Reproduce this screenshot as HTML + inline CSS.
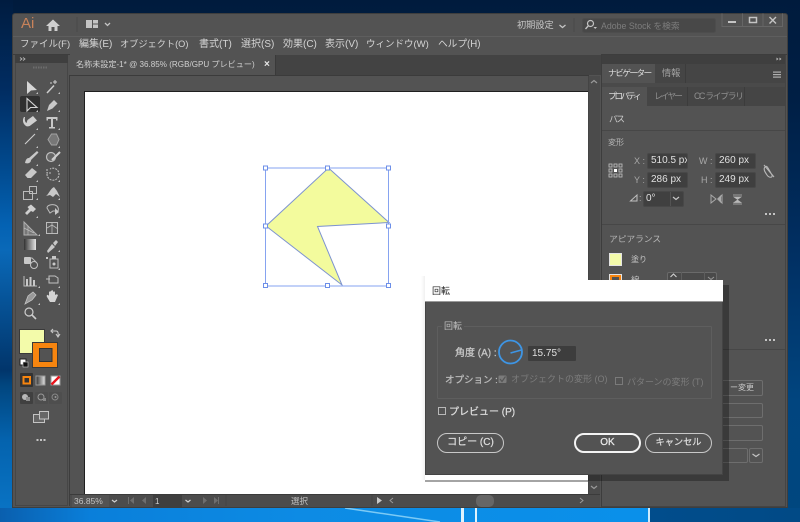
<!DOCTYPE html>
<html lang="ja"><head><meta charset="utf-8">
<style>
*{box-sizing:border-box}
html,body{margin:0;padding:0}
body{width:800px;height:522px;overflow:hidden;position:relative;font-family:"Liberation Sans","Noto Sans CJK JP",sans-serif;background:#012a5c;filter:blur(.3px)}
.a{position:absolute}
.t{position:absolute;white-space:nowrap;font-size:10px;line-height:12px;color:#c8c8c8}
.m{top:38px;line-height:13px;color:#d4d4d4}
.b{-webkit-text-stroke:.25px currentColor}
svg{position:absolute;left:0;top:0}
.inp{position:absolute;background:#3f3f3f;border:1px solid #484848;color:#e0e0e0;font-size:10px;line-height:14px;padding-left:3px;white-space:nowrap;overflow:hidden;height:16px;border-radius:2px}
.btn{position:absolute;border:1.500px solid #c8c8c8;border-radius:10px;height:20px;color:#dcdcdc;font-size:10px;line-height:17px;text-align:center;-webkit-text-stroke:.25px currentColor}
.ol{position:absolute;border:1px solid #6e6e6e;border-radius:2px}
</style></head><body>
<!-- desktop -->
<div class="a" style="left:0;top:0;width:800px;height:522px;background:linear-gradient(180deg,#001b3d 0,#001f45 70px,#01356f 180px,#01508f 300px,#014a8a 400px,#01508f 522px)"></div>
<div class="a" style="left:0;top:0;width:13px;height:522px;background:linear-gradient(180deg,#001c40 0,#012d62 90px,#014b90 170px,#0462b3 225px,#0a69b8 250px,#01356b 370px,#01467f 385px,#0463ae 440px,#0a76c8 522px)"></div>
<div class="a" style="left:787px;top:0;width:13px;height:522px;background:linear-gradient(180deg,#001b3d 0,#001f45 100px,#012f62 250px,#01457f 400px,#00477f 522px)"></div>
<div class="a" style="left:0;top:508px;width:800px;height:14px;background:linear-gradient(90deg,#0a5fae 0,#0a7fda 90px,#0d8be4 300px,#0a90ea 648px,#014d8c 650px,#014a86 800px)"></div>
<svg width="800" height="522"><path d="M345 508L440 522" stroke="#7ccaf5" stroke-width="1.500" fill="none"/><rect x="461" y="508" width="3" height="14" fill="#dff3fd"/><rect x="475" y="508" width="2" height="14" fill="#dff3fd"/><rect x="648" y="508" width="2" height="14" fill="#cdeafc"/></svg>
<!-- window -->
<div class="a" style="left:12px;top:13px;width:776px;height:495px;background:#535353;border:1px solid #3e3e3e;border-radius:3px 3px 0 0"></div>
<!-- title bar -->
<div class="t" style="left:21px;top:15px;font-size:15px;line-height:17px;color:#c9835a">Ai</div>
<svg width="800" height="60">
<path d="M46 26L53 19.500L60 26H57.500V31H54.500V27H51.500V31H48.500V26Z" fill="#cfcfcf"/>
<line x1="77" y1="17" x2="77" y2="32" stroke="#484848"/>
<rect x="86" y="20" width="6" height="8" fill="#c4c4c4"/><rect x="93" y="20" width="5" height="3.500" fill="#c4c4c4"/><rect x="93" y="24.500" width="5" height="3.500" fill="#c4c4c4"/>
<path d="M105 23L107.500 25.500L110 23" stroke="#c4c4c4" stroke-width="1.300" fill="none"/>
<path d="M559.500 25L562.500 27.500L565.500 25" stroke="#c4c4c4" stroke-width="1.300" fill="none"/>
<line x1="574" y1="18" x2="574" y2="32" stroke="#484848"/>
<rect x="582.500" y="18.500" width="133" height="14" rx="2" fill="#484848" stroke="#4d4d4d"/>
<circle cx="590.500" cy="23.500" r="3" fill="none" stroke="#c4c4c4" stroke-width="1.200"/><path d="M588.300 25.800L585.500 29" stroke="#c4c4c4" stroke-width="1.400"/><path d="M593.500 27L597 27L595.200 29Z" fill="#c4c4c4"/>
<path d="M722 13.500V26.500H782.500V13.500M742.500 13.500V26.500M763 13.500V26.500" fill="none" stroke="#666"/>
<rect x="728" y="21" width="8" height="2" fill="#c4c4c4"/>
<rect x="749.500" y="17.500" width="7" height="5" fill="none" stroke="#c4c4c4" stroke-width="1.500"/>
<path d="M769.500 17L776 23.500M776 17L769.500 23.500" stroke="#c4c4c4" stroke-width="1.400"/>
</svg>
<div class="t" style="left:517px;top:19px;font-size:9.200px;color:#c8c8c8">初期設定</div>
<div class="t" style="left:601px;top:20px;font-size:8.800px;color:#7d7d7d">Adobe Stock を検索</div>
<!-- menu -->
<div class="a" style="left:13px;top:36px;width:774px;height:1px;background:#5e5e5e"></div>
<div class="t m" style="left:20px;font-size:9.500px">ファイル(F)</div>
<div class="t m" style="left:79px;font-size:10px">編集(E)</div>
<div class="t m" style="left:120px;font-size:9.200px">オブジェクト(O)</div>
<div class="t m" style="left:199px;font-size:10px">書式(T)</div>
<div class="t m" style="left:241px;font-size:10px">選択(S)</div>
<div class="t m" style="left:283px;font-size:10px">効果(C)</div>
<div class="t m" style="left:325px;font-size:10px">表示(V)</div>
<div class="t m" style="left:366px;font-size:9.500px">ウィンドウ(W)</div>
<div class="t m" style="left:438px;font-size:9.700px">ヘルプ(H)</div>
<div class="a" style="left:13px;top:54px;width:774px;height:1px;background:#3d3d3d"></div>
<!-- left toolbar -->
<div class="a" style="left:15px;top:55px;width:53px;height:451px;background:#535353;border:1px solid #464646"></div>
<div class="a" style="left:15px;top:55px;width:53px;height:8px;background:#3f3f3f"></div>
<svg width="80" height="80"><path d="M20 57.500L22 59L20 60.500M23 57.500L25 59L23 60.500" fill="none" stroke="#bbb" stroke-width=".800"/><line x1="33" y1="67.500" x2="48" y2="67.500" stroke="#6c6c6c" stroke-width="2" stroke-dasharray="1.500 1"/></svg>
<!-- canvas area -->
<div class="a" style="left:69px;top:54px;width:532px;height:452px;background:#535353;border-left:1px solid #3d3d3d"></div>
<div class="a" style="left:69px;top:55px;width:532px;height:20px;background:#434343"></div>
<div class="a" style="left:69px;top:55px;width:207px;height:20px;background:#535353;border-right:1px solid #3a3a3a"></div>
<div class="t" style="left:76px;top:59px;font-size:8.100px;color:#d0d0d0">名称未設定-1* @ 36.85% (RGB/GPU プレビュー)</div>
<div class="t" style="left:264px;top:59px;font-size:10px;font-weight:bold;color:#e8e8e8">×</div>
<div class="a" style="left:69px;top:75px;width:520px;height:1px;background:#3b3b3b"></div>
<div class="a" style="left:84px;top:91px;width:504px;height:403px;background:#fff;border:1px solid #1f1f1f;border-right:none;border-bottom:none"></div>
<!-- vertical scrollbar -->
<div class="a" style="left:588px;top:76px;width:12px;height:430px;background:#4b4b4b;border-left:1px solid #444"></div>
<svg width="800" height="522"><path d="M591 83L594 80.500L597 83" fill="none" stroke="#9a9a9a" stroke-width="1.200"/><path d="M591 486L594 488.500L597 486" fill="none" stroke="#9a9a9a" stroke-width="1.200"/></svg>
<!-- status bar -->
<div class="a" style="left:70px;top:494px;width:530px;height:13px;background:#4c4c4c;border-top:1px solid #3b3b3b"></div>
<div class="a" style="left:72px;top:495px;width:37px;height:12px;background:#535353"></div>
<div class="t" style="left:74px;top:496px;font-size:8.500px;line-height:11px;color:#c4c4c4">36.85%</div>
<div class="a" style="left:153px;top:495px;width:29px;height:12px;background:#3f3f3f"></div>
<div class="t" style="left:155px;top:497px;font-size:8px;line-height:10px;color:#d0d0d0">1</div>
<div class="t" style="left:291px;top:496px;font-size:8.500px;line-height:11px;color:#c0c0c0">選択</div>
<div class="a" style="left:476px;top:495px;width:18px;height:12px;background:#666;border-radius:5px"></div>
<svg width="800" height="522">
<g fill="none" stroke="#d0d0d0" stroke-width="1.200"><path d="M112 500L114.500 502L117 500"/><path d="M185.500 500L188 502L190.500 500"/></g>
<g fill="#6e6e6e"><rect x="128" y="497" width="1" height="7"/><path d="M134 497V504L130 500.500Z"/><path d="M146 497V504L142 500.500Z"/><path d="M203 497V504L207 500.500Z"/><path d="M214 497V504L218 500.500Z"/><rect x="218" y="497" width="1" height="7"/></g>
<path d="M377 497V504L382 500.500Z" fill="#c8c8c8"/><path d="M393 498L390 500.500L393 503" fill="none" stroke="#999" stroke-width="1"/><path d="M580 498L583 500.500L580 503" fill="none" stroke="#999" stroke-width="1"/>
<line x1="226" y1="495" x2="226" y2="506" stroke="#444"/><line x1="372" y1="495" x2="372" y2="506" stroke="#444"/>
</svg>
<!-- artwork -->
<svg width="800" height="522">
<path d="M328.500 168L389 222.500L317.500 226.500L342 285L266 226Z" fill="#f3fb9d" stroke="#7d93d0" stroke-width="1"/>
<rect x="265.500" y="168" width="123" height="118" fill="none" stroke="#86a3f0" stroke-width="1"/>
<g fill="#fff" stroke="#6d8fe8" stroke-width="1"><rect x="263.500" y="166" width="4" height="4"/><rect x="325.500" y="166" width="4" height="4"/><rect x="386.500" y="166" width="4" height="4"/><rect x="263.500" y="224" width="4" height="4"/><rect x="386.500" y="224" width="4" height="4"/><rect x="263.500" y="283.500" width="4" height="4"/><rect x="325.500" y="283.500" width="4" height="4"/><rect x="386.500" y="283.500" width="4" height="4"/></g>
</svg>
<!-- tools -->
<div class="a" style="left:20px;top:96px;width:20px;height:16px;background:#303030;border-radius:2px"></div>
<svg width="80" height="522">
<g fill="#c8c8c8">
<path d="M27 81V94L31 90.500L37 90Z" fill="#d6d6d6"/>
<path d="M47 93L54 85.500" stroke="#cfcfcf" stroke-width="1.500"/><path d="M55 80V84M53 82H57M50 83H52" stroke="#cfcfcf" stroke-width="1"/>
<path d="M27 98.500V111L30.500 107.500L37 107.500Z" fill="none" stroke="#d4d4d4" stroke-width="1.100"/>
<path d="M47 111L49 105L54 100L57.500 103.500L52.500 108.500Z"/>
<path d="M24 117C22 120 23 124 26 126C28 127 30 126 31 125L37 120.500L33 116L27.500 120L26.500 123C25 122 24.500 120 25 117Z" fill="#cfcfcf"/>
<path d="M46.500 117H57.500V120.500H56V119H53V127H55V128.500H49V127H51V119H48V120.500H46.500Z"/>
<path d="M25 144L35 134" stroke="#cfcfcf" stroke-width="1.100"/>
<path d="M48 139.500L51.500 134H56.500L59 139.500L56.500 145H51.500Z" fill="#777" stroke="#a2a2a2"/>
<path d="M25 163C26 158 28 158 29 158L37 151L38.500 152.500L31 160C31 163 28 164 25 163Z"/>
<circle cx="51" cy="157" r="4.500" fill="#666" stroke="#bdbdbd" stroke-width="1.200"/><path d="M52 160L60 152" stroke="#d0d0d0" stroke-width="2"/>
<path d="M25 175L32 168L37 172L31 178H27.500Z"/>
<path d="M47 174A6 6 0 1 0 50 169M47 169V173H51" fill="none" stroke="#bcbcbc" stroke-width="1.100" stroke-dasharray="2 1"/>
<rect x="23.500" y="191.500" width="9" height="8" fill="none" stroke="#bbb"/><rect x="29.500" y="186.500" width="7" height="7" fill="none" stroke="#bbb"/>
<path d="M46 196C49 194 50 189 54 187L57 191L60 197L56 194L53 197L50 195Z"/>
<path d="M25 213L29 209L27.500 207L31 204.500L36 209L33 212L31 211L27 215Z" fill="#cfcfcf"/>
<path d="M47 208C47 205 52 204 55 205C58 206 59 209 58 211H53L50 213Z" fill="none" stroke="#bcbcbc"/><path d="M55 208V215L59 212Z"/>
<path d="M24 222V235H37L24 222Z" fill="#777" stroke="#b0b0b0"/><path d="M24 228L34 233M28 226V235" stroke="#bbb" stroke-width=".700"/>
<rect x="46.500" y="222.500" width="11" height="11" fill="#5a5a5a" stroke="#bbb"/><path d="M47 228L52 225L58 229M52 223V233" stroke="#bbb" stroke-width=".800" fill="none"/>
<path d="M47 251L52 244L55 247L48 253Z"/><path d="M53 243L56 240L58 242L55 246Z"/>
<path d="M27 258L32 258L36 262" stroke="#bbb" fill="none"/><rect x="24" y="257" width="7" height="7" rx="1"/><circle cx="34" cy="265" r="3.500" fill="none" stroke="#c4c4c4"/>
<rect x="50" y="259" width="8" height="9" fill="none" stroke="#bbb"/><rect x="52" y="256" width="4" height="3"/><circle cx="54" cy="264" r="1.500"/><rect x="46" y="257" width="2" height="2"/>
<path d="M24 276V286H37" fill="none" stroke="#bbb"/><rect x="26" y="279" width="2" height="7"/><rect x="29.500" y="277" width="2" height="9"/><rect x="33" y="280" width="2" height="6"/>
<path d="M49 276V283H58V278L55 276H49Z M46 279H50" fill="none" stroke="#c0c0c0"/>
<path d="M25 304L28 296L33 292L36 295L32 300Z" fill="#999" stroke="#c4c4c4" stroke-width=".800"/>
<path d="M47 297C46 295 48 294 49 296V292C50 291 51 291 51 292V291C52 290 53 290 53 291V292C54 291 55 291 55 293V295C56 294 57 294 58 295L55 302H50Z" fill="#d4d4d4"/>
<circle cx="29" cy="312" r="4" fill="none" stroke="#cdcdcd" stroke-width="1.200"/><path d="M32 315L36 319" stroke="#cdcdcd" stroke-width="1.600"/>
</g>
<g fill="#c4c4c4"><path d="M38 94V92L36 94Z"/><path d="M60 94V92L58 94Z"/><path d="M38 112V110L36 112Z"/><path d="M60 112V110L58 112Z"/><path d="M38 130V128L36 130Z"/><path d="M60 130V128L58 130Z"/><path d="M38 148V146L36 148Z"/><path d="M60 148V146L58 148Z"/><path d="M38 166V164L36 166Z"/><path d="M60 166V164L58 166Z"/><path d="M38 182V180L36 182Z"/><path d="M60 182V180L58 182Z"/><path d="M38 200V198L36 200Z"/><path d="M60 200V198L58 200Z"/><path d="M38 218V216L36 218Z"/><path d="M60 218V216L58 218Z"/><path d="M40 236V234L38 236Z"/><path d="M60 252V250L58 252Z"/><path d="M60 270V268L58 270Z"/><path d="M40 288V286L38 288Z"/><path d="M60 288V286L58 288Z"/><path d="M40 305V303L38 305Z"/><path d="M60 305V303L58 305Z"/></g>
<defs><linearGradient id="g1"><stop offset="0" stop-color="#333"/><stop offset="1" stop-color="#e6e6e6"/></linearGradient></defs>
<rect x="24" y="239" width="12" height="11" fill="url(#g1)"/>
<!-- fill/stroke -->
<rect x="19.500" y="329.500" width="25" height="24" fill="#f3fbaa" stroke="#3a3a3a"/>
<rect x="32.500" y="342.500" width="25" height="25" fill="#f7850f" stroke="#3a3a3a"/>
<rect x="39.500" y="348.500" width="12.500" height="13" fill="#535353" stroke="#333"/>
<path d="M52 331H56C58 331 58.500 333 58 336M53 329L51 331L53 333M56 334L58 337L60 334" fill="none" stroke="#c8c8c8" stroke-width="1.100"/>
<rect x="20" y="359" width="6" height="6" fill="#fff" stroke="#222"/><rect x="23" y="362" width="5" height="5" fill="#111" stroke="#ccc" stroke-width=".600"/>
<!-- modes -->
<rect x="20" y="373" width="13" height="14" rx="1" fill="#333"/>
<rect x="23.500" y="377" width="6.500" height="6.500" fill="none" stroke="#f7850f" stroke-width="2"/>
<rect x="36" y="376" width="9" height="9" fill="url(#g1)" stroke="#999"/>
<rect x="51" y="376" width="9" height="9" fill="#fff" stroke="#999"/><path d="M51.500 384.500L59.500 376.500" stroke="#e8141c" stroke-width="2.400"/>
<rect x="20" y="392" width="13" height="12" rx="1" fill="#404040"/><rect x="35" y="392" width="13" height="12" rx="1" fill="#4e4e4e"/><rect x="49" y="392" width="13" height="12" rx="1" fill="#4e4e4e"/>
<circle cx="25" cy="397" r="3" fill="#b8b8b8"/><rect x="26" y="397" width="4" height="4" fill="#8e8e8e"/>
<circle cx="41" cy="397" r="3" fill="none" stroke="#9a9a9a"/><rect x="43" y="398" width="3" height="3" fill="#888"/>
<circle cx="55" cy="397" r="3" fill="none" stroke="#888"/><circle cx="55.500" cy="397" r="1" fill="#999"/>
<rect x="33.500" y="414.500" width="11" height="8" fill="#666" stroke="#c4c4c4"/><rect x="39.500" y="411.500" width="9" height="7.500" fill="#666" stroke="#c4c4c4"/>
<g fill="#c4c4c4"><rect x="36.500" y="439" width="2" height="2"/><rect x="40" y="439" width="2" height="2"/><rect x="43.500" y="439" width="2" height="2"/></g>
</svg>
<!-- right panel -->
<div class="a" style="left:601px;top:55px;width:185px;height:452px;background:#535353;border-left:1px solid #3d3d3d;border-right:1px solid #444;border-bottom:1px solid #444"></div>
<div class="a" style="left:602px;top:55px;width:183px;height:9px;background:#3f3f3f"></div>
<div class="a" style="left:602px;top:64px;width:183px;height:19px;background:#454545"></div>
<div class="a" style="left:602px;top:64px;width:53px;height:19px;background:#535353"></div>
<div class="a" style="left:685px;top:64px;width:1px;height:19px;background:#3c3c3c"></div>
<div class="t" style="left:608px;top:67px;font-size:8.800px;letter-spacing:-1.700px;color:#dadada">ナビゲーター</div>
<div class="t" style="left:662px;top:67px;font-size:9.200px;color:#a4a4a4">情報</div>
<div class="a" style="left:602px;top:83px;width:183px;height:4px;background:#4a4a4a"></div>
<div class="a" style="left:602px;top:87px;width:183px;height:19px;background:#454545"></div>
<div class="a" style="left:602px;top:87px;width:45px;height:19px;background:#535353"></div>
<div class="a" style="left:687px;top:87px;width:1px;height:19px;background:#3c3c3c"></div>
<div class="a" style="left:744px;top:87px;width:1px;height:19px;background:#3c3c3c"></div>
<div class="t" style="left:608px;top:90px;font-size:8.800px;letter-spacing:-2.400px;color:#dadada">プロパティ</div>
<div class="t" style="left:654px;top:90px;font-size:8.800px;letter-spacing:-2px;color:#8f8f8f">レイヤー</div>
<div class="t" style="left:694px;top:90px;font-size:8.800px;letter-spacing:-1.300px;color:#8f8f8f">CC ライブラリ</div>
<div class="t" style="left:609px;top:113px;font-size:8.800px;letter-spacing:-1.500px;color:#c8c8c8">パス</div>
<div class="a" style="left:602px;top:130px;width:183px;height:1px;background:#474747"></div>
<div class="t" style="left:608px;top:137px;font-size:8px;color:#b4b4b4">変形</div>
<div class="t" style="left:634px;top:155px;font-size:9px;color:#a8a8a8">X :</div>
<div class="t" style="left:634px;top:174px;font-size:9px;color:#a8a8a8">Y :</div>
<div class="t" style="left:699px;top:155px;font-size:9px;color:#a8a8a8">W :</div>
<div class="t" style="left:701px;top:174px;font-size:9px;color:#a8a8a8">H :</div>
<div class="inp" style="left:647px;top:153px;width:41px;">510.5 px</div>
<div class="inp" style="left:647px;top:172px;width:41px">286 px</div>
<div class="inp" style="left:715px;top:153px;width:41px">260 px</div>
<div class="inp" style="left:715px;top:172px;width:41px">249 px</div>
<div class="t" style="left:639px;top:192px;font-size:9px;color:#a8a8a8">:</div>
<div class="inp" style="left:643px;top:191px;width:41px;background:#404040;padding-left:2px">0°</div>
<div class="a" style="left:670px;top:192px;width:1px;height:14px;background:#535353"></div>
<svg width="800" height="522">
<path d="M776.500 57.500L778.500 59L776.500 60.500V57.500ZM779.500 57.500L781.500 59L779.500 60.500Z" fill="#bbb"/>
<g fill="#b0b0b0"><rect x="773" y="71.500" width="8" height="1.200"/><rect x="773" y="74" width="8" height="1.200"/><rect x="773" y="76.500" width="8" height="1.200"/></g>
<g fill="none" stroke="#c4c4c4" stroke-width=".800"><rect x="609" y="164" width="3" height="3"/><rect x="614" y="164" width="3" height="3"/><rect x="619" y="164" width="3" height="3"/><rect x="609" y="169" width="3" height="3"/><rect x="619" y="169" width="3" height="3"/><rect x="609" y="174" width="3" height="3"/><rect x="614" y="174" width="3" height="3"/><rect x="619" y="174" width="3" height="3"/></g>
<rect x="614" y="169" width="3" height="3" fill="#fff"/>
<path d="M765 167C763 169 765 172 767 175C769 178 773 178 772 175L768 168C767 166 766 166 765 167ZM764 165L774 177" fill="none" stroke="#b8b8b8" stroke-width="1.100"/>
<path d="M630.500 201L637 195V201Z" fill="none" stroke="#c0c0c0"/>
<path d="M673 197L676 199.500L679 197" fill="none" stroke="#c8c8c8" stroke-width="1.200"/>
<path d="M711 195V203L716 199ZM722 195V203L718 199Z" fill="none" stroke="#aaa"/><path d="M721 195V203L717 199Z" fill="#aaa"/>
<path d="M733 195H742M733 204H742M734 197H741L737.500 199.500ZM734 202.500H741L737.500 200Z" fill="#b8b8b8" stroke="#b8b8b8" stroke-width=".700"/>
<g fill="#c4c4c4"><rect x="765" y="213" width="2" height="2"/><rect x="769" y="213" width="2" height="2"/><rect x="773" y="213" width="2" height="2"/><rect x="765" y="339" width="2" height="2"/><rect x="769" y="339" width="2" height="2"/><rect x="773" y="339" width="2" height="2"/></g>
</svg>
<div class="a" style="left:602px;top:224px;width:183px;height:1px;background:#474747"></div>
<div class="t" style="left:609px;top:233px;font-size:8.800px;letter-spacing:-.100px;color:#b4b4b4">アピアランス</div>
<div class="a" style="left:609px;top:253px;width:13px;height:13px;background:#f3fbaa;border:1px solid #e4e4e4"></div>
<div class="t" style="left:631px;top:254px;font-size:8px;color:#c4c4c4">塗り</div>
<div class="a" style="left:609px;top:274px;width:13px;height:7px;background:#f7850f;border:1px solid #e4e4e4"></div>
<div class="a" style="left:612px;top:277px;width:7px;height:4px;background:#535353"></div>
<div class="t" style="left:631px;top:274px;font-size:8.500px;color:#c4c4c4">線</div>
<div class="ol" style="left:667px;top:272px;width:50px;height:9px;border-bottom:none;border-color:#6a6a6a;background:#4a4a4a"></div>
<div class="a" style="left:681px;top:272px;width:1px;height:8px;background:#5e5e5e"></div>
<div class="a" style="left:704px;top:272px;width:1px;height:8px;background:#5e5e5e"></div>
<svg width="800" height="522"><path d="M670.500 277L673.500 274L676.500 277" fill="none" stroke="#d0d0d0" stroke-width="1.100"/><path d="M708 277L711 279.500L714 277" fill="none" stroke="#999"/></svg>
<div class="a" style="left:602px;top:349px;width:183px;height:1px;background:#474747"></div>
<div class="ol" style="left:720px;top:380px;width:43px;height:16px"></div>
<div class="t" style="left:730px;top:382px;font-size:8px;color:#c8c8c8">ー変更</div>
<div class="ol" style="left:720px;top:403px;width:43px;height:15px"></div>
<div class="ol" style="left:720px;top:425px;width:43px;height:16px"></div>
<div class="ol" style="left:720px;top:448px;width:28px;height:15px"></div>
<div class="ol" style="left:749px;top:448px;width:14px;height:15px"></div>
<svg width="800" height="522"><path d="M752.500 454L756 456.500L759.500 454" fill="none" stroke="#c4c4c4" stroke-width="1.200"/></svg>
<!-- dialog shadow -->
<div class="a" style="left:723px;top:285px;width:6px;height:196px;background:rgba(0,0,0,.3)"></div>
<div class="a" style="left:588px;top:475px;width:135px;height:6px;background:rgba(0,0,0,.3)"></div>
<div class="a" style="left:425px;top:480px;width:163px;height:2px;background:#a4a4a4"></div>
<div class="a" style="left:421px;top:276px;width:4px;height:204px;background:linear-gradient(90deg,rgba(0,0,0,0),rgba(0,0,0,.06))"></div>
<!-- dialog -->
<div class="a" style="left:425px;top:280px;width:298px;height:195px;background:#535353;border:1px solid #444"></div>
<div class="a" style="left:425px;top:280px;width:298px;height:22px;background:#fff;border-bottom:1px solid #9a9a9a"></div>
<div class="t" style="left:432px;top:285px;font-size:9px;color:#222">回転</div>
<div class="a" style="left:437px;top:326px;width:275px;height:73px;border:1px solid #5e5e5e;border-radius:1px"></div>
<div class="a" style="left:442px;top:320px;padding:0 2px;background:#535353;font-size:9px;line-height:12px;color:#c0c0c0">回転</div>
<div class="t b" style="left:455px;top:348px;font-size:10px;color:#c8c8c8">角度 (A) :</div>
<svg width="800" height="522"><circle cx="510.500" cy="352" r="11.500" fill="none" stroke="#3e95e4" stroke-width="1.800"/><path d="M510.500 353L521.500 350" stroke="#3e95e4" stroke-width="1.500"/>
<rect x="498.500" y="375.500" width="8" height="7.500" rx="1" fill="#7b7b7b"/><path d="M500 379L502 381.500L505.500 376.500" fill="none" stroke="#565656" stroke-width="1.200"/>
</svg>
<div class="a" style="left:528px;top:346px;width:48px;height:15px;background:#3d3d3d;border-radius:1px;color:#e0e0e0;font-size:10px;line-height:15px;padding-left:4px">15.75°</div>
<div class="t b" style="left:445px;top:375px;font-size:9.500px;color:#bcbcbc">オプション :</div>
<div class="t" style="left:511px;top:373px;font-size:9px;color:#7c7c7c">オブジェクトの変形 (O)</div>
<div class="a" style="left:615px;top:377px;width:8px;height:8px;border:1px solid #7a7a7a"></div>
<div class="t" style="left:627px;top:376px;font-size:9px;color:#7c7c7c">パターンの変形 (T)</div>
<div class="a" style="left:438px;top:407px;width:8px;height:8px;border:1px solid #b8b8b8"></div>
<div class="t b" style="left:449px;top:407px;font-size:10px;color:#dcdcdc">プレビュー (P)</div>
<div class="btn" style="left:437px;top:433px;width:67px">コピー (C)</div>
<div class="btn" style="left:574px;top:433px;width:67px;border-color:#f4f4f4;border-width:2px;line-height:16px;color:#e8e8e8">OK</div>
<div class="btn" style="left:645px;top:433px;width:67px;font-size:9.200px">キャンセル</div>
</body></html>
